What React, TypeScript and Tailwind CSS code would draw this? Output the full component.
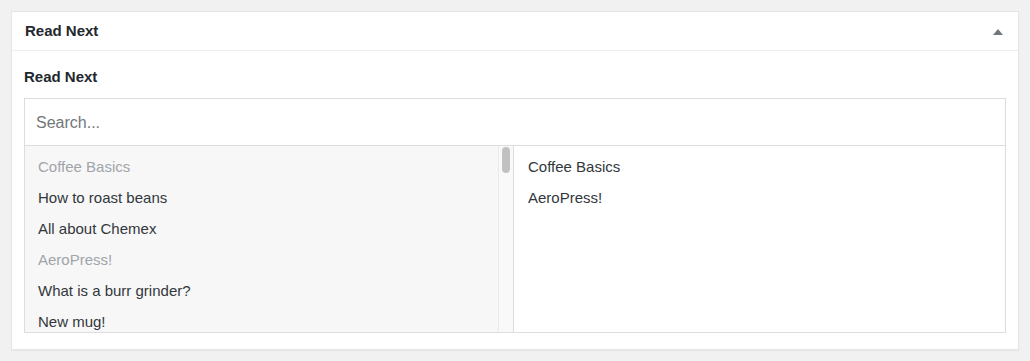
const available = [
  { title: 'Coffee Basics', selected: true },
  { title: 'How to roast beans', selected: false },
  { title: 'All about Chemex', selected: false },
  { title: 'AeroPress!', selected: true },
  { title: 'What is a burr grinder?', selected: false },
  { title: 'New mug!', selected: false },
];

const chosen = ['Coffee Basics', 'AeroPress!'];

export default function App() {
  return (
    <div
      className="min-h-[361px] bg-[#f1f1f1] p-[11px] text-[#32373c]"
      style={{ fontFamily: '"Liberation Sans", Arial, sans-serif' }}
    >
      <div className="w-[1008px] border border-[#e5e5e5] bg-white shadow-[0_1px_1px_rgba(0,0,0,0.04)]">
        {/* Header */}
        <div className="flex h-[39px] items-center justify-between border-b border-[#eeeeee] pl-[13px] pr-[15px]">
          <h2 className="text-[15px] font-bold text-[#23282d]">Read Next</h2>
          <svg width="10" height="6" viewBox="0 0 10 6" className="mt-[1px]">
            <path d="M5 0L10 6H0z" fill="#72777c" />
          </svg>
        </div>

        {/* Body */}
        <div className="px-[12px] pt-[18px] pb-[16px]">
          <div className="mb-[13px] text-[15px] font-bold leading-[16px] text-[#23282d]">Read Next</div>
          <div className="w-[982px] border border-[#dddddd]">
            <div className="flex h-[47px] items-center border-b border-[#dddddd] px-[11px] pt-[2px]">
              <span className="text-[16px] text-[#72777c]">Search...</span>
            </div>
            <div className="flex h-[186px]">
              {/* Available list */}
              <div className="flex w-[489px] overflow-hidden border-r border-[#dddddd] bg-[#f7f7f7]">
                <ul className="flex-1 pl-[13px] pt-[11px]">
                  {available.map((item) => (
                    <li
                      key={item.title}
                      className={`h-[31px] text-[15px] leading-[20px] ${
                        item.selected ? 'text-[#a0a5aa]' : 'text-[#32373c]'
                      }`}
                    >
                      {item.title}
                    </li>
                  ))}
                </ul>
                <div className="w-[15px] border-l border-[#eaeaea] bg-[#f9f9f9] pt-[1px] pl-[3px]">
                  <div className="h-[26px] w-[8px] rounded-full bg-[#c1c1c1]" />
                </div>
              </div>
              {/* Chosen list */}
              <ul className="flex-1 bg-white pl-[14px] pt-[11px]">
                {chosen.map((title) => (
                  <li key={title} className="h-[31px] text-[15px] leading-[20px] text-[#32373c]">
                    {title}
                  </li>
                ))}
              </ul>
            </div>
          </div>
        </div>
      </div>
    </div>
  );
}
